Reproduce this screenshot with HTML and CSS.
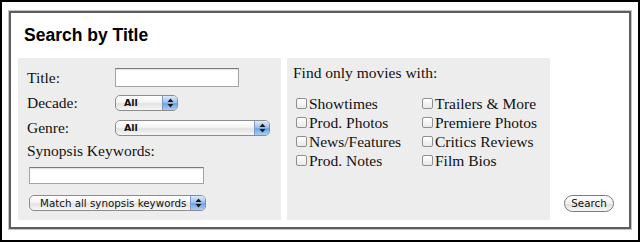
FILE: index.html
```html
<!DOCTYPE html>
<html lang="en">
<head>
    <meta charset="UTF-8">
    <title>Search by Title</title>
    <link rel="stylesheet" href="styles.css">
</head>
<body>
    <div class="frame">
        <div class="box">
            <h1>Search by Title</h1>

            <div class="panels">
                <!-- title / decade / genre / keywords -->
                <div class="panel panel-left">
                    <div class="row">
                        <label class="lbl">Title:</label>
                        <span class="field field-title"></span>
                    </div>
                    <div class="row">
                        <label class="lbl">Decade:</label>
                        <span class="sel sel-decade">
                            <span class="sel-text bold">All</span>
                            <span class="sel-arrow"><svg width="7" height="10" viewBox="0 0 7 10"><path d="M3.5 0.5 L6.5 4 L0.5 4 Z M3.5 9.5 L6.5 6 L0.5 6 Z" fill="#1a1a1a"/></svg></span>
                        </span>
                    </div>
                    <div class="row row-genre">
                        <label class="lbl">Genre:</label>
                        <span class="sel sel-genre">
                            <span class="sel-text bold">All</span>
                            <span class="sel-arrow"><svg width="7" height="10" viewBox="0 0 7 10"><path d="M3.5 0.5 L6.5 4 L0.5 4 Z M3.5 9.5 L6.5 6 L0.5 6 Z" fill="#1a1a1a"/></svg></span>
                        </span>
                    </div>
                    <div class="syn-label">Synopsis Keywords:</div>
                    <span class="field field-syn"></span>
                    <span class="sel sel-match">
                        <span class="sel-text sel-text-wide">Match all synopsis keywords</span>
                        <span class="sel-arrow"><svg width="7" height="10" viewBox="0 0 7 10"><path d="M3.5 0.5 L6.5 4 L0.5 4 Z M3.5 9.5 L6.5 6 L0.5 6 Z" fill="#1a1a1a"/></svg></span>
                    </span>
                </div>

                <!-- content filters -->
                <div class="panel panel-right">
                    <div class="find">Find only movies with:</div>
                    <div class="checks">
                        <div class="chk"><span class="box-chk"></span>Showtimes</div>
                        <div class="chk"><span class="box-chk"></span>Trailers &amp; More</div>
                        <div class="chk"><span class="box-chk"></span>Prod. Photos</div>
                        <div class="chk"><span class="box-chk"></span>Premiere Photos</div>
                        <div class="chk"><span class="box-chk"></span>News/Features</div>
                        <div class="chk"><span class="box-chk"></span>Critics Reviews</div>
                        <div class="chk"><span class="box-chk"></span>Prod. Notes</div>
                        <div class="chk"><span class="box-chk"></span>Film Bios</div>
                    </div>
                </div>

                <div class="actions">
                    <span class="btn">Search</span>
                </div>
            </div>
        </div>
    </div>
</body>
</html>
```

FILE: styles.css
```css
body {
    margin: 0;
    background: #fff;
    font-family: "Liberation Serif", "Times New Roman", serif;
    font-size: 15.5px;
    color: #111;
}
.frame {
    width: 640px;
    height: 242px;
    box-sizing: border-box;
    border: 2px solid #000;
    padding: 9px 7px 11px 7px;
}
.box {
    height: 100%;
    box-sizing: border-box;
    border: 2px solid #5e5e5e;
    box-shadow: 0 0 0 1px #c4c4c4;
    padding: 0 7px 7px 7px;
}
h1 {
    margin: 0 0 13px 0;
    padding: 12px 0 0 6px;
    font-family: "Liberation Sans", Arial, sans-serif;
    font-size: 17.5px;
    line-height: 20px;
    font-weight: bold;
    color: #000;
}
.panels {
    display: flex;
    gap: 6px;
    height: 162px;
}
.panel {
    width: 263px;
    background: #ededed;
    box-sizing: border-box;
}
.panel-left {
    padding: 7px 0 0 9px;
}
.row {
    display: flex;
    align-items: center;
    height: 25px;
}
.row-genre {
    height: 26px;
}
.lbl {
    width: 88px;
    flex-shrink: 0;
}
.field {
    display: block;
    box-sizing: border-box;
    background: #fff;
    border: 1px solid #a4a4a4;
    border-top-color: #7c7c7c;
    box-shadow: inset 0 1px 1px rgba(0, 0, 0, 0.12);
}
.field-title {
    width: 124px;
    height: 19px;
}
.field-syn {
    width: 175px;
    height: 17px;
    margin: 7px 0 0 2px;
}
.syn-label {
    height: 18px;
    line-height: 18px;
    margin-top: 1px;
}

/* aqua style popup */
.sel {
    display: flex;
    align-items: stretch;
    box-sizing: border-box;
    height: 16px;
    border: 1px solid #8c8c8c;
    border-radius: 5px;
    overflow: hidden;
    background: linear-gradient(#ffffff, #f4f4f4 45%, #e2e2e2 55%, #f6f6f6);
    font-family: "DejaVu Sans", sans-serif;
    font-size: 10.3px;
    color: #111;
}
.sel-text {
    flex: 1;
    line-height: 14px;
    padding-left: 8px;
    white-space: nowrap;
}
.sel-text-wide {
    padding-left: 10px;
}
.bold {
    font-weight: bold;
    font-size: 9.5px;
}
.sel-arrow {
    width: 14px;
    display: flex;
    align-items: center;
    justify-content: center;
    border-left: 1px solid #7f9cc8;
    background: linear-gradient(#dceaf9, #9fc3ee 45%, #6fa3e4 55%, #a9d0f5);
}
.sel-decade {
    width: 63px;
}
.sel-genre {
    width: 155px;
}
.sel-match {
    width: 177px;
    margin: 11px 0 0 2px;
}

.panel-right {
    padding: 6px 0 0 6px;
}
.find {
    line-height: 18px;
}
.checks {
    display: grid;
    grid-template-columns: 126px 1fr;
    grid-auto-rows: 19px;
    margin-top: 12px;
}
.chk {
    display: flex;
    align-items: center;
    white-space: nowrap;
}
.box-chk {
    width: 11px;
    height: 11px;
    box-sizing: border-box;
    margin: 0 2px 0 3px;
    border: 1px solid #8f8f8f;
    border-radius: 2px;
    background: linear-gradient(#ffffff, #e9e9e9);
}

.actions {
    flex: 1;
    display: flex;
    flex-direction: column;
    justify-content: flex-end;
    align-items: center;
    padding: 0 0 8px 0;
}
.btn {
    display: block;
    box-sizing: border-box;
    width: 50px;
    height: 17px;
    line-height: 15px;
    text-align: center;
    border: 1px solid #7a7a7a;
    border-radius: 9px;
    background: linear-gradient(#ffffff, #f1f1f1 50%, #dedede 52%, #f7f7f7);
    font-family: "DejaVu Sans", sans-serif;
    font-size: 10.3px;
    color: #111;
}
```
